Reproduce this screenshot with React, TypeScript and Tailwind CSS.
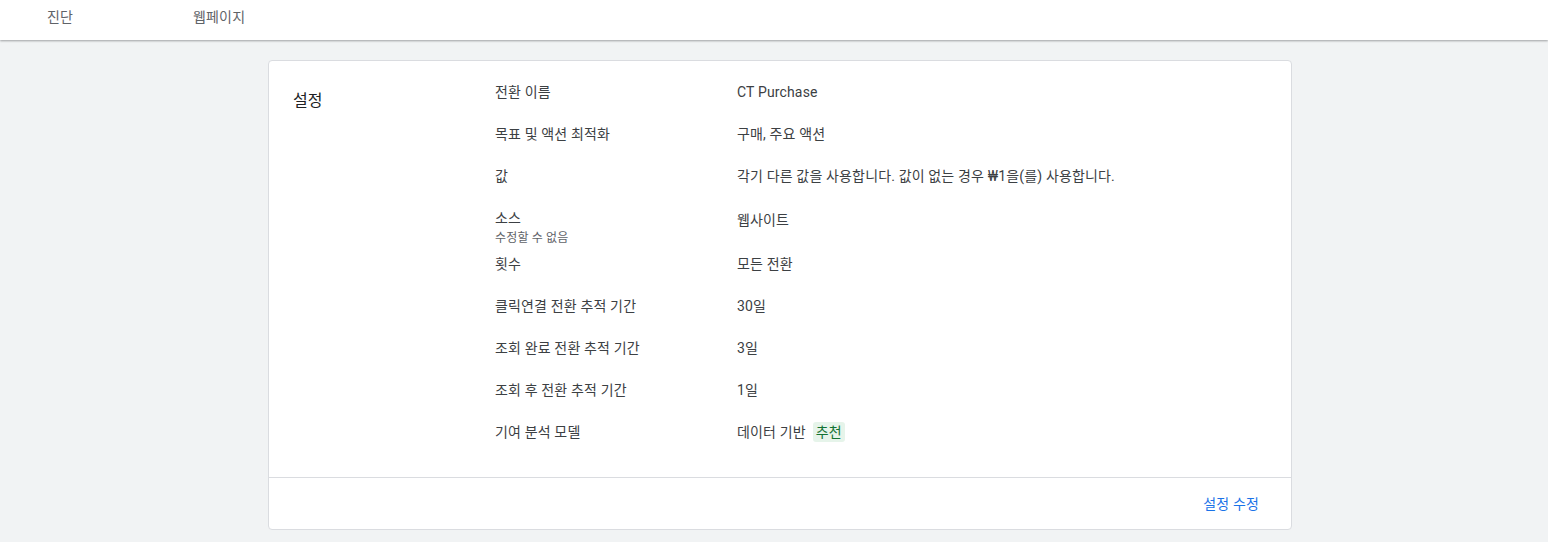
const rows: { label: string; sub?: string; value: string; tag?: string }[] = [
  { label: '전환 이름', value: 'CT Purchase' },
  { label: '목표 및 액션 최적화', value: '구매, 주요 액션' },
  { label: '값', value: '각기 다른 값을 사용합니다. 값이 없는 경우 ₩1을(를) 사용합니다.' },
  { label: '소스', sub: '수정할 수 없음', value: '웹사이트' },
  { label: '횟수', value: '모든 전환' },
  { label: '클릭연결 전환 추적 기간', value: '30일' },
  { label: '조회 완료 전환 추적 기간', value: '3일' },
  { label: '조회 후 전환 추적 기간', value: '1일' },
  { label: '기여 분석 모델', value: '데이터 기반', tag: '추천' },
]

export default function App() {
  return (
    <div
      className="min-h-[542px] bg-[#f1f3f4] text-[#3c4043] tracking-[0.15px]"
      style={{ fontFamily: 'Roboto, "Noto Sans CJK KR", sans-serif' }}
    >
      <header className="h-[40px] bg-white shadow-[0_1px_2px_rgba(60,64,67,0.45)] flex items-start text-[14px] leading-[20px] text-[#5f6368]">
        <span className="ml-[47px] mt-[7px]">진단</span>
        <span className="ml-[120px] mt-[7px]">웹페이지</span>
      </header>

      <div className="pt-[20px] pb-[12px] pl-[268px]">
        <section className="w-[1024px] bg-white border border-[#dadce0] rounded-[4px]">
          <div className="flex pt-[10px] pb-[24px]">
            <h2 className="w-[226px] shrink-0 pl-[24px] pt-[18px] text-[16px] leading-[24px] text-[#202124]">설정</h2>
            <div className="flex-1 text-[14px] leading-[20px]">
              {rows.map((r) => (
                <div key={r.label} className="flex py-[11px]">
                  <div className="w-[242px] shrink-0">
                    <div>{r.label}</div>
                    {r.sub && (
                      <div className="text-[12px] leading-[16px] mt-[2px] -mb-[14px] text-[#5f6368]">{r.sub}</div>
                    )}
                  </div>
                  <div className="flex items-center gap-[7px]">
                    <span>{r.value}</span>
                    {r.tag && (
                      <span className="bg-[#e6f4ea] text-[#137333] rounded-[3px] px-[3px]">{r.tag}</span>
                    )}
                  </div>
                </div>
              ))}
            </div>
          </div>
          <div className="border-t border-[#dadce0] h-[52px] flex items-center justify-end pr-[32px]">
            <button className="text-[14px] leading-[20px] text-[#1a73e8]">설정 수정</button>
          </div>
        </section>
      </div>
    </div>
  )
}
